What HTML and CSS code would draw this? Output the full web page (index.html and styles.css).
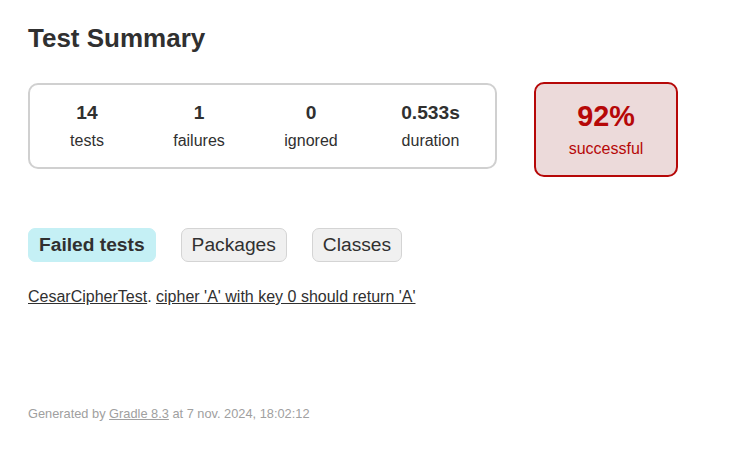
FILE: index.html
```html
<!DOCTYPE html>
<html>
<head>
<meta charset="utf-8">
<title>Test results - Test Summary</title>
<link rel="stylesheet" href="styles.css">
</head>
<body>
<div class="content">
  <h1 class="title">Test Summary</h1>
  <div class="summary">
    <div class="group">
      <div class="info"><div class="counter">14</div><p class="label">tests</p></div>
      <div class="info"><div class="counter">1</div><p class="label">failures</p></div>
      <div class="info"><div class="counter">0</div><p class="label">ignored</p></div>
      <div class="info duration"><div class="counter">0.533s</div><p class="label">duration</p></div>
    </div>
    <div class="rate">
      <div class="info"><div class="counter percent">92%</div><p class="label">successful</p></div>
    </div>
  </div>
  <ul class="tabs">
    <li class="tab selected"><a href="#tab0">Failed tests</a></li>
    <li class="tab"><a href="#tab1">Packages</a></li>
    <li class="tab"><a href="#tab2">Classes</a></li>
  </ul>
  <ul class="links">
    <li><a href="#c">CesarCipherTest</a>. <a href="#t">cipher 'A' with key 0 should return 'A'</a></li>
  </ul>
  <p class="footer">Generated by <a href="#g">Gradle 8.3</a> at 7 nov. 2024, 18:02:12</p>
</div>
</body>
</html>
```
FILE: styles.css
```css
body {
  margin: 0;
  padding: 0;
  font-family: "Liberation Sans", Arial, sans-serif;
  font-size: 16px;
  color: #303030;
  background: #ffffff;
}
a, a:visited { color: #303030; }
.content { padding: 13px 28px; }
.title {
  font-size: 26px;
  font-weight: bold;
  margin: 10px 0 29px 0;
}
.summary {
  display: flex;
  align-items: flex-start;
  margin-bottom: 41px;
}
.group {
  display: flex;
  gap: 2px;
  padding: 2px;
  border: 2px solid #d0d0d0;
  border-radius: 10px;
}
.info {
  width: 110px;
  padding: 15px 0;
  text-align: center;
}
.info.duration { width: 125px; }
.counter {
  font-size: 19.2px;
  font-weight: bold;
  margin-bottom: 8px;
}
.label { margin: 0; }
.rate {
  margin-left: 37px;
  margin-top: -1px;
  width: 136px;
  padding: 2px;
  border: 2px solid #b60808;
  border-radius: 10px;
  background: #ecdada;
  color: #b60808;
}
.rate .info { width: 136px; }
.percent { font-size: 28.8px; line-height: 31px; }
.tabs {
  display: flex;
  list-style: none;
  margin: 0 0 16px 0;
  padding: 10px 0;
}
.tab {
  padding: 5px 10px;
  margin-right: 25px;
  border: 1px solid #d4d4d4;
  border-radius: 7px;
  background: #f0f0f0;
}
.tab a {
  font-size: 19.2px;
  text-decoration: none;
  display: block;
}
.tab.selected {
  background: #c5f0f5;
  border-color: #c5f0f5;
}
.tab.selected a { font-weight: bold; }
.links {
  list-style: none;
  padding: 0;
  margin: 0;
}
.links li { margin-bottom: 5px; }
.footer {
  margin: 100px 0 0 0;
  font-size: 12.8px;
  color: #a0a0a0;
  white-space: nowrap;
}
.footer a { color: #a0a0a0; }
```
